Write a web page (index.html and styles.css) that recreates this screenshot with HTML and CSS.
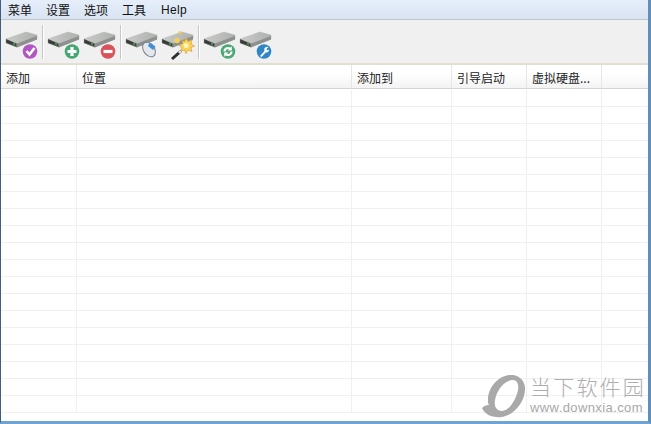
FILE: index.html
```html
<!DOCTYPE html>
<html lang="zh">
<head>
<meta charset="utf-8">
<title>菜单</title>
<link rel="stylesheet" href="styles.css">
</head>
<body>
<svg class="defs" width="0" height="0">
  <defs>
    <linearGradient id="top" x1="0" y1="0" x2="1" y2="0"><stop offset="0" stop-color="#c9cbc9"/><stop offset="1" stop-color="#aeb1ae"/></linearGradient>
    <linearGradient id="side" x1="0" y1="0" x2="1" y2="0"><stop offset="0" stop-color="#4a4c4a"/><stop offset="1" stop-color="#6f726f"/></linearGradient>
    <g id="drive">
      <path d="M1 8 L21 1 L32 4 L32 8 L12 15.500 L1 12Z" fill="url(#top)" stroke="#b5b7b5" stroke-width=".5" stroke-linejoin="round"/>
      <path d="M1 8 L1 12 L12 16.500 L12 12.500Z" fill="url(#side)"/>
      <path d="M12 12.500 L32 5 L32 8.500 L12 16.500Z" fill="#8d908d"/>
      <path d="M2 9 L11 13 L11 15 L2 11.500Z" fill="#383a38"/>
      <path d="M8 12 L10 12.800 L10 14 L8 13.200Z" fill="#3fc04f"/>
    </g>
  </defs>
</svg>
<div class="window">
  <nav class="menubar">
    <span class="menu">菜单</span><span class="menu">设置</span><span class="menu">选项</span><span class="menu">工具</span><span class="menu">Help</span>
  </nav>
  <div class="toolbar">
    <svg class="tool" width="36" height="30" viewBox="0 0 36 30"><use href="#drive"/><circle cx="25" cy="20.500" r="7.300" fill="#b256c4"/><path d="M21.500 20 L24.500 23.500 L29.500 17" fill="none" stroke="#fff" stroke-width="2.600"/></svg>
    <span class="sep"></span>
    <svg class="tool" width="36" height="30" viewBox="0 0 36 30"><use href="#drive"/><circle cx="25" cy="20.500" r="7.300" fill="#45a873"/><path d="M20.500 20.500 H29.500 M25 16 V25" stroke="#fff" stroke-width="3.200"/></svg>
    <svg class="tool" width="36" height="30" viewBox="0 0 36 30"><use href="#drive"/><circle cx="25" cy="20.500" r="7.300" fill="#d8535b"/><path d="M20.500 20.500 H29.500" stroke="#fff" stroke-width="3.200"/></svg>
    <span class="sep"></span>
    <svg class="tool" width="36" height="30" viewBox="0 0 36 30"><use href="#drive"/><ellipse cx="24" cy="18.500" rx="5.500" ry="8" transform="rotate(-35 24 18.500)" fill="#e4e8ee" stroke="#76808c"/><path d="M24.500 11.500 L30.500 15.500 L28 19 L23 15Z" fill="#3e8fd8"/></svg>
    <svg class="tool" width="36" height="30" viewBox="0 0 36 30"><use href="#drive"/><path d="M25 7 L27 10.500 L31 9 L30 13 L33.500 15 L30 16.500 L31 20.500 L27 19 L25 22.500 L23.500 19 L19.500 20 L21 16.500 L18 14.500 L21.500 13 L21 9.500 L23.500 10.500Z" fill="#f8d35a" stroke="#d9a032" stroke-width=".7"/><circle cx="25" cy="14.500" r="2.500" fill="#fff3c0"/><circle cx="16" cy="9.500" r="2.800" fill="#f5cf5c"/><circle cx="19" cy="1.800" r="1.700" fill="#eec860"/><path d="M11 28 L20 20" stroke="#2d2d2d" stroke-width="3"/><path d="M18 22 L20 20" stroke="#ddd" stroke-width="3"/></svg>
    <span class="sep"></span>
    <svg class="tool" width="36" height="30" viewBox="0 0 36 30"><use href="#drive"/><circle cx="25" cy="20.500" r="7.300" fill="#4ea876"/><path d="M21.500 20.500 A3.500 3.500 0 0 1 27.500 18 M28.500 20.500 A3.500 3.500 0 0 1 22.500 23" fill="none" stroke="#fff" stroke-width="2"/><path d="M28.800 15.300 V19.500 H24.600Z M21.200 25.700 V21.500 H25.400Z" fill="#fff"/></svg>
    <svg class="tool" width="36" height="30" viewBox="0 0 36 30"><use href="#drive"/><circle cx="25" cy="20.500" r="7.300" fill="#2f86c6"/><path d="M21 25 L25.500 20 A3 3 0 0 1 29.500 16 L27.500 18 L28.500 19.500 L30 18.500 A3 3 0 0 1 26.800 21.500 L22.500 26Z" fill="#fff"/></svg>
  </div>
  <div class="table">
    <div class="row head">
      <span class="cell c1">添加</span><span class="cell c2">位置</span><span class="cell c3">添加到</span><span class="cell c4">引导启动</span><span class="cell c5">虚拟硬盘...</span><span class="cell c6"></span>
    </div>
    <div class="row"><span class="cell c1"></span><span class="cell c2"></span><span class="cell c3"></span><span class="cell c4"></span><span class="cell c5"></span><span class="cell c6"></span></div>
    <div class="row"><span class="cell c1"></span><span class="cell c2"></span><span class="cell c3"></span><span class="cell c4"></span><span class="cell c5"></span><span class="cell c6"></span></div>
    <div class="row"><span class="cell c1"></span><span class="cell c2"></span><span class="cell c3"></span><span class="cell c4"></span><span class="cell c5"></span><span class="cell c6"></span></div>
    <div class="row"><span class="cell c1"></span><span class="cell c2"></span><span class="cell c3"></span><span class="cell c4"></span><span class="cell c5"></span><span class="cell c6"></span></div>
    <div class="row"><span class="cell c1"></span><span class="cell c2"></span><span class="cell c3"></span><span class="cell c4"></span><span class="cell c5"></span><span class="cell c6"></span></div>
    <div class="row"><span class="cell c1"></span><span class="cell c2"></span><span class="cell c3"></span><span class="cell c4"></span><span class="cell c5"></span><span class="cell c6"></span></div>
    <div class="row"><span class="cell c1"></span><span class="cell c2"></span><span class="cell c3"></span><span class="cell c4"></span><span class="cell c5"></span><span class="cell c6"></span></div>
    <div class="row"><span class="cell c1"></span><span class="cell c2"></span><span class="cell c3"></span><span class="cell c4"></span><span class="cell c5"></span><span class="cell c6"></span></div>
    <div class="row"><span class="cell c1"></span><span class="cell c2"></span><span class="cell c3"></span><span class="cell c4"></span><span class="cell c5"></span><span class="cell c6"></span></div>
    <div class="row"><span class="cell c1"></span><span class="cell c2"></span><span class="cell c3"></span><span class="cell c4"></span><span class="cell c5"></span><span class="cell c6"></span></div>
    <div class="row"><span class="cell c1"></span><span class="cell c2"></span><span class="cell c3"></span><span class="cell c4"></span><span class="cell c5"></span><span class="cell c6"></span></div>
    <div class="row"><span class="cell c1"></span><span class="cell c2"></span><span class="cell c3"></span><span class="cell c4"></span><span class="cell c5"></span><span class="cell c6"></span></div>
    <div class="row"><span class="cell c1"></span><span class="cell c2"></span><span class="cell c3"></span><span class="cell c4"></span><span class="cell c5"></span><span class="cell c6"></span></div>
    <div class="row"><span class="cell c1"></span><span class="cell c2"></span><span class="cell c3"></span><span class="cell c4"></span><span class="cell c5"></span><span class="cell c6"></span></div>
    <div class="row"><span class="cell c1"></span><span class="cell c2"></span><span class="cell c3"></span><span class="cell c4"></span><span class="cell c5"></span><span class="cell c6"></span></div>
    <div class="row"><span class="cell c1"></span><span class="cell c2"></span><span class="cell c3"></span><span class="cell c4"></span><span class="cell c5"></span><span class="cell c6"></span></div>
    <div class="row"><span class="cell c1"></span><span class="cell c2"></span><span class="cell c3"></span><span class="cell c4"></span><span class="cell c5"></span><span class="cell c6"></span></div>
    <div class="row"><span class="cell c1"></span><span class="cell c2"></span><span class="cell c3"></span><span class="cell c4"></span><span class="cell c5"></span><span class="cell c6"></span></div>
    <div class="row"><span class="cell c1"></span><span class="cell c2"></span><span class="cell c3"></span><span class="cell c4"></span><span class="cell c5"></span><span class="cell c6"></span></div>
  </div>
  <div class="watermark">
    <svg class="wm-logo" width="44" height="43" viewBox="0 0 44 43"><path fill-rule="evenodd" d="M0 33 C3 40 11 43 20 42 C33 40 44 25 43 12 C42 4 35 -1 27 0 C14 2 6 14 6 25 C6 27 6 29 7 30 C4 30 2 31 0 33Z M31 5 C35 5 37 9 36 15 C34 25 27 36 20 36 C14 36 12 31 13 25 C15 14 23 5 31 5Z" fill="#a9a9a9"/></svg>
    <div class="wm-text">
      <div class="wm-title">当下软件园</div>
      <div class="wm-url">www.downxia.com</div>
    </div>
  </div>
</div>
</body>
</html>
```
FILE: styles.css
```css
html, body { margin: 0; padding: 0; }
body { width: 651px; height: 424px; overflow: hidden; background: #fff; font-family: "Noto Sans CJK SC", "Liberation Sans", sans-serif; }
.defs { position: absolute; }
.window { position: relative; width: 651px; height: 424px; box-sizing: border-box; border-left: 1px solid #3f5f7d; border-right: 3px solid #5f8fbc; border-bottom: 3px solid #6fa3d3; overflow: hidden; display: flex; flex-direction: column; }
.menubar { height: 20px; flex: none; box-sizing: border-box; display: flex; align-items: center; padding-left: 7px; gap: 14px; background: linear-gradient(#e6eefa, #d9e3f2); border-bottom: 1px solid #c0c6cf; font-size: 12px; color: #111; }
.menu:last-child { font-family: "Liberation Sans", sans-serif; font-size: 12px; margin-left: 1px; letter-spacing: .3px; }
.toolbar { height: 45px; flex: none; box-sizing: border-box; display: flex; align-items: center; padding: 9px 0 0 4px; background: #f0f0f0; border-bottom: 2px solid #e2dfd2; }
.tool { display: block; flex: none; }
.sep { width: 1px; height: 34px; background: #c6c6c6; border-right: 1px solid #fff; margin: -9px 3px 0 1px; flex: none; }
.table { flex: 1; min-height: 0; background: #fff; overflow: hidden; }
.row { display: flex; height: 17px; box-sizing: border-box; border-bottom: 1px solid #f0f0f0; }
.row .cell { border-right: 1px solid #f0f0f0; box-sizing: border-box; flex: none; }
.row.head { height: 24px; margin-bottom: 1px; border-bottom: 1px solid #d5d5d5; background: linear-gradient(#fff 40%, #f3f3f3); align-items: stretch; font-size: 12px; color: #222; line-height: 25px; }
.row.head .cell { border-right: 1px solid #e6e6e6; padding-left: 5px; white-space: nowrap; }
.c1 { width: 76px; }
.c2 { width: 275px; }
.c3 { width: 100px; }
.c4 { width: 75px; }
.c5 { width: 75px; }
.c6 { flex: 1 !important; border-right: 0 !important; }
.row.head .c3, .row.head .c4 { padding-left: 5px; }
.row.head .c3 { padding-left: 5px; }
.watermark { position: absolute; left: 481px; top: 375px; display: flex; align-items: flex-start; gap: 4px; }
.wm-logo { display: block; flex: none; }
.wm-text { margin-top: -2px; }
.wm-title { font-size: 21px; line-height: 26px; letter-spacing: 2.200px; color: #aeaeae; white-space: nowrap; font-weight: 300; }
.wm-url { font-family: "Liberation Sans", sans-serif; font-size: 13px; line-height: 15px; margin-top: 1px; color: #a8a8a8; white-space: nowrap; letter-spacing: .4px; }
```
